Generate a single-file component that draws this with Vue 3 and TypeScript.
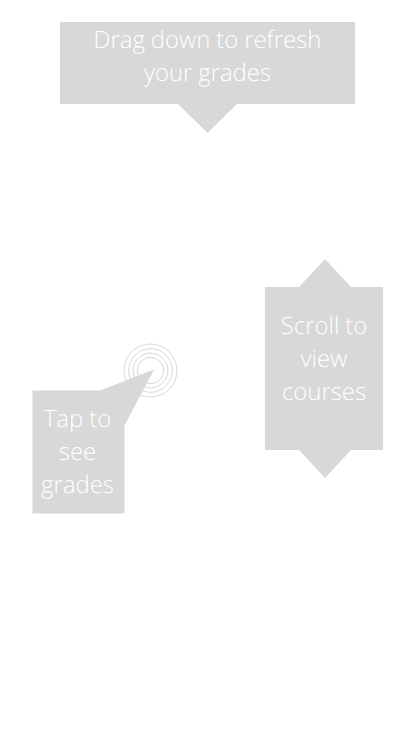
<script setup lang="ts">
const refreshLines: string[] = ['Drag down to refresh', 'your grades']
const tapLines: string[] = ['Tap to', 'see', 'grades']
const scrollLines: string[] = ['Scroll to', 'view', 'courses']
const rings: number[] = [26.5, 21.8, 17.4, 13.2]
</script>

<template>
  <main class="guide">
    <section class="callout refresh">
      <span v-for="line in refreshLines" :key="line">{{ line }}</span>
    </section>
    <div class="row">
      <section class="tap">
        <svg class="shape" width="146" height="171" viewBox="32 343 146 171" aria-hidden="true">
          <circle v-for="r in rings" :key="r" cx="150.5" cy="370.5" :r="r" />
          <path d="M32.5 390.5H100L154 369.5L124.5 425.5V513.5H32.5Z" />
        </svg>
        <div class="tap-text">
          <span v-for="line in tapLines" :key="line">{{ line }}</span>
        </div>
      </section>
      <section class="callout scroll">
        <span v-for="line in scrollLines" :key="line">{{ line }}</span>
      </section>
    </div>
  </main>
</template>

<style>
body {
  background: #fff;
}
</style>

<style scoped>
.guide {
  box-sizing: border-box;
  width: 414px;
  height: 736px;
  padding-top: 22px;
  overflow: hidden;
  color: #fff;
  font: 300 23.9px/33px 'Open Sans', sans-serif;
  text-rendering: geometricPrecision;
  word-spacing: -0.3px;
}

span {
  display: block;
  white-space: nowrap;
}

.callout {
  box-sizing: border-box;
  background: #d8d8d8;
  text-align: center;
}

.refresh {
  width: 295px;
  height: 111px;
  margin-left: 60px;
  padding-top: 1px;
  clip-path: polygon(0 0, 100% 0, 100% 82px, 177px 82px, 147.5px 111px, 118px 82px, 0 82px);
}

.row {
  display: flex;
  align-items: flex-start;
  margin-top: 126px;
  padding-left: 32px;
}

.tap {
  display: grid;
  width: 146px;
  height: 171px;
  margin-top: 84px;
}

.shape,
.tap-text {
  grid-area: 1 / 1;
}

.shape circle {
  fill: none;
  stroke: #d8d8d8;
}

.shape path {
  fill: #d8d8d8;
}

.tap-text {
  width: 91px;
  padding-top: 59px;
  text-align: center;
}

.scroll {
  width: 118px;
  height: 219px;
  margin-left: 87px;
  padding-top: 50px;
  clip-path: polygon(0 28px, 34px 28px, 60px 0, 86px 28px, 100% 28px, 100% 191px, 86px 191px, 60px 219px, 34px 191px, 0 191px);
}
</style>
